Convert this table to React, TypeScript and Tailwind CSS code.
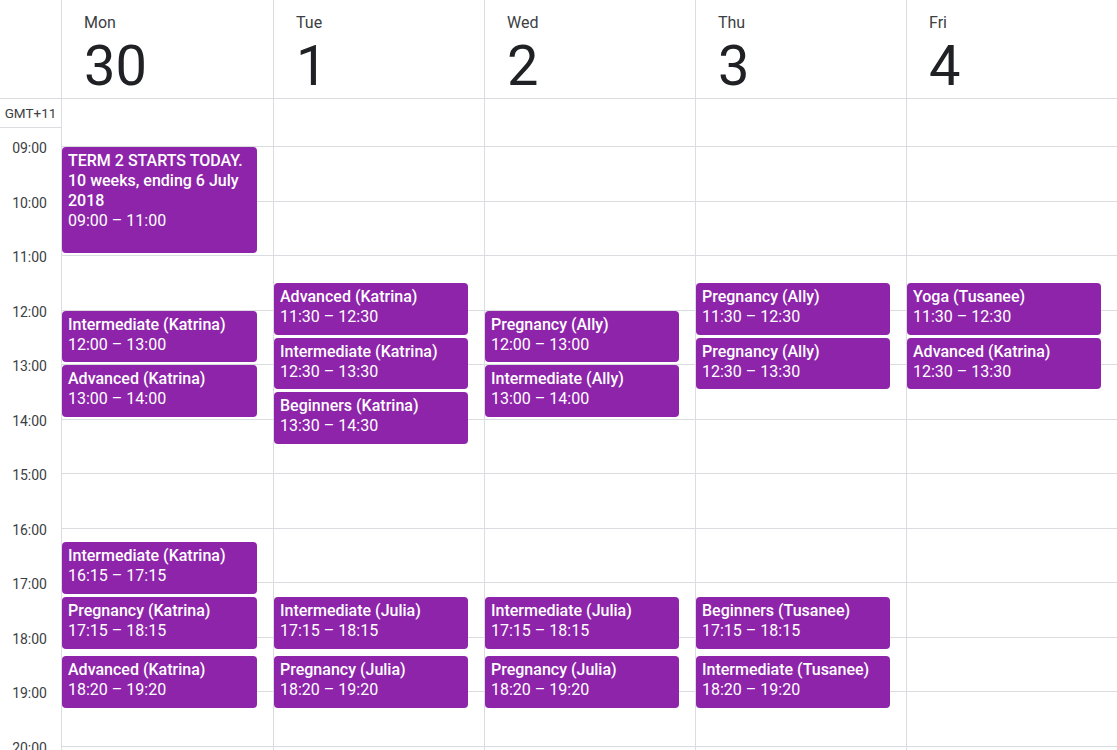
import { FC } from "react";

const HOUR = 54.545;
const START = 9;

interface IEvent {
  title: string;
  start: number;
  end: number;
  time: string;
}

const ev = (title: string, time: string): IEvent => {
  const [a, b] = time.split(" – ");
  const toNum = (s: string) => {
    const [h, m] = s.split(":").map(Number);
    return h + m / 60;
  };
  return { title, time, start: toNum(a), end: toNum(b) };
};

const days: { name: string; date: string; events: IEvent[] }[] = [
  {
    name: "Mon",
    date: "30",
    events: [
      ev("TERM 2 STARTS TODAY. 10 weeks, ending 6 July 2018", "09:00 – 11:00"),
      ev("Intermediate (Katrina)", "12:00 – 13:00"),
      ev("Advanced (Katrina)", "13:00 – 14:00"),
      ev("Intermediate (Katrina)", "16:15 – 17:15"),
      ev("Pregnancy (Katrina)", "17:15 – 18:15"),
      ev("Advanced (Katrina)", "18:20 – 19:20"),
    ],
  },
  {
    name: "Tue",
    date: "1",
    events: [
      ev("Advanced (Katrina)", "11:30 – 12:30"),
      ev("Intermediate (Katrina)", "12:30 – 13:30"),
      ev("Beginners (Katrina)", "13:30 – 14:30"),
      ev("Intermediate (Julia)", "17:15 – 18:15"),
      ev("Pregnancy (Julia)", "18:20 – 19:20"),
    ],
  },
  {
    name: "Wed",
    date: "2",
    events: [
      ev("Pregnancy (Ally)", "12:00 – 13:00"),
      ev("Intermediate (Ally)", "13:00 – 14:00"),
      ev("Intermediate (Julia)", "17:15 – 18:15"),
      ev("Pregnancy (Julia)", "18:20 – 19:20"),
    ],
  },
  {
    name: "Thu",
    date: "3",
    events: [
      ev("Pregnancy (Ally)", "11:30 – 12:30"),
      ev("Pregnancy (Ally)", "12:30 – 13:30"),
      ev("Beginners (Tusanee)", "17:15 – 18:15"),
      ev("Intermediate (Tusanee)", "18:20 – 19:20"),
    ],
  },
  {
    name: "Fri",
    date: "4",
    events: [
      ev("Yoga (Tusanee)", "11:30 – 12:30"),
      ev("Advanced (Katrina)", "12:30 – 13:30"),
    ],
  },
];

const hours = [9, 10, 11, 12, 13, 14, 15, 16, 17, 18, 19, 20, 21];
const pad = (h: number) => `${h < 10 ? "0" : ""}${h}:00`;

const DayColumn: FC<{ name: string; date: string; events: IEvent[]; first: boolean }> = ({
  name,
  date,
  events,
  first,
}) => {
  return (
    <div className={first ? "flex flex-col" : "flex flex-col border-l border-[#dadce0]"}>
      <div className="h-[99px] border-b border-[#dadce0] pl-[22px] pt-[13px]">
        <div className="text-[16px] leading-5 text-[#3c4043]">{name}</div>
        <div className="mt-[5px] text-[56px] leading-[56px] text-[#202124]">{date}</div>
      </div>
      <div className="relative">
        <div className="h-[48px] border-b border-[#dadce0]" />
        {hours.map((h) => (
          <div key={h} className="h-[54.545px] border-b border-[#dadce0]" />
        ))}
        {events.map((e, i) => (
          <div
            key={i}
            className="absolute left-0 right-[16px] overflow-hidden rounded-[4px] bg-[#8e24aa] px-[6px] pt-[4px] text-[16px] leading-5 text-white"
            style={{
              top: 48 + (e.start - START) * HOUR,
              height: (e.end - e.start) * HOUR - 3,
            }}
          >
            <div className="font-medium">{e.title}</div>
            <div>{e.time}</div>
          </div>
        ))}
      </div>
    </div>
  );
};

const App: FC = () => {
  return (
    <div className="h-screen overflow-hidden bg-white font-['Roboto',sans-serif]">
      <div className="grid grid-cols-[62px_repeat(5,1fr)]">
        <div className="flex flex-col border-r border-[#dadce0]">
          <div className="h-[99px] border-b border-[#dadce0]" />
          <div className="flex h-[29px] items-center justify-center border-b border-[#dadce0] pt-[1px] text-[13.5px] text-[#3c4043]">
            GMT+11
          </div>
          <div className="h-[20px]" />
          {hours.map((h) => (
            <div key={h} className="h-[54.545px] pr-[14px] text-right">
              <div className="-mt-[8px] text-[14px] leading-4 text-[#3c4043]">{pad(h)}</div>
            </div>
          ))}
        </div>
        {days.map((d, i) => (
          <DayColumn key={d.name} {...d} first={i === 0} />
        ))}
      </div>
    </div>
  );
};

export default App;
